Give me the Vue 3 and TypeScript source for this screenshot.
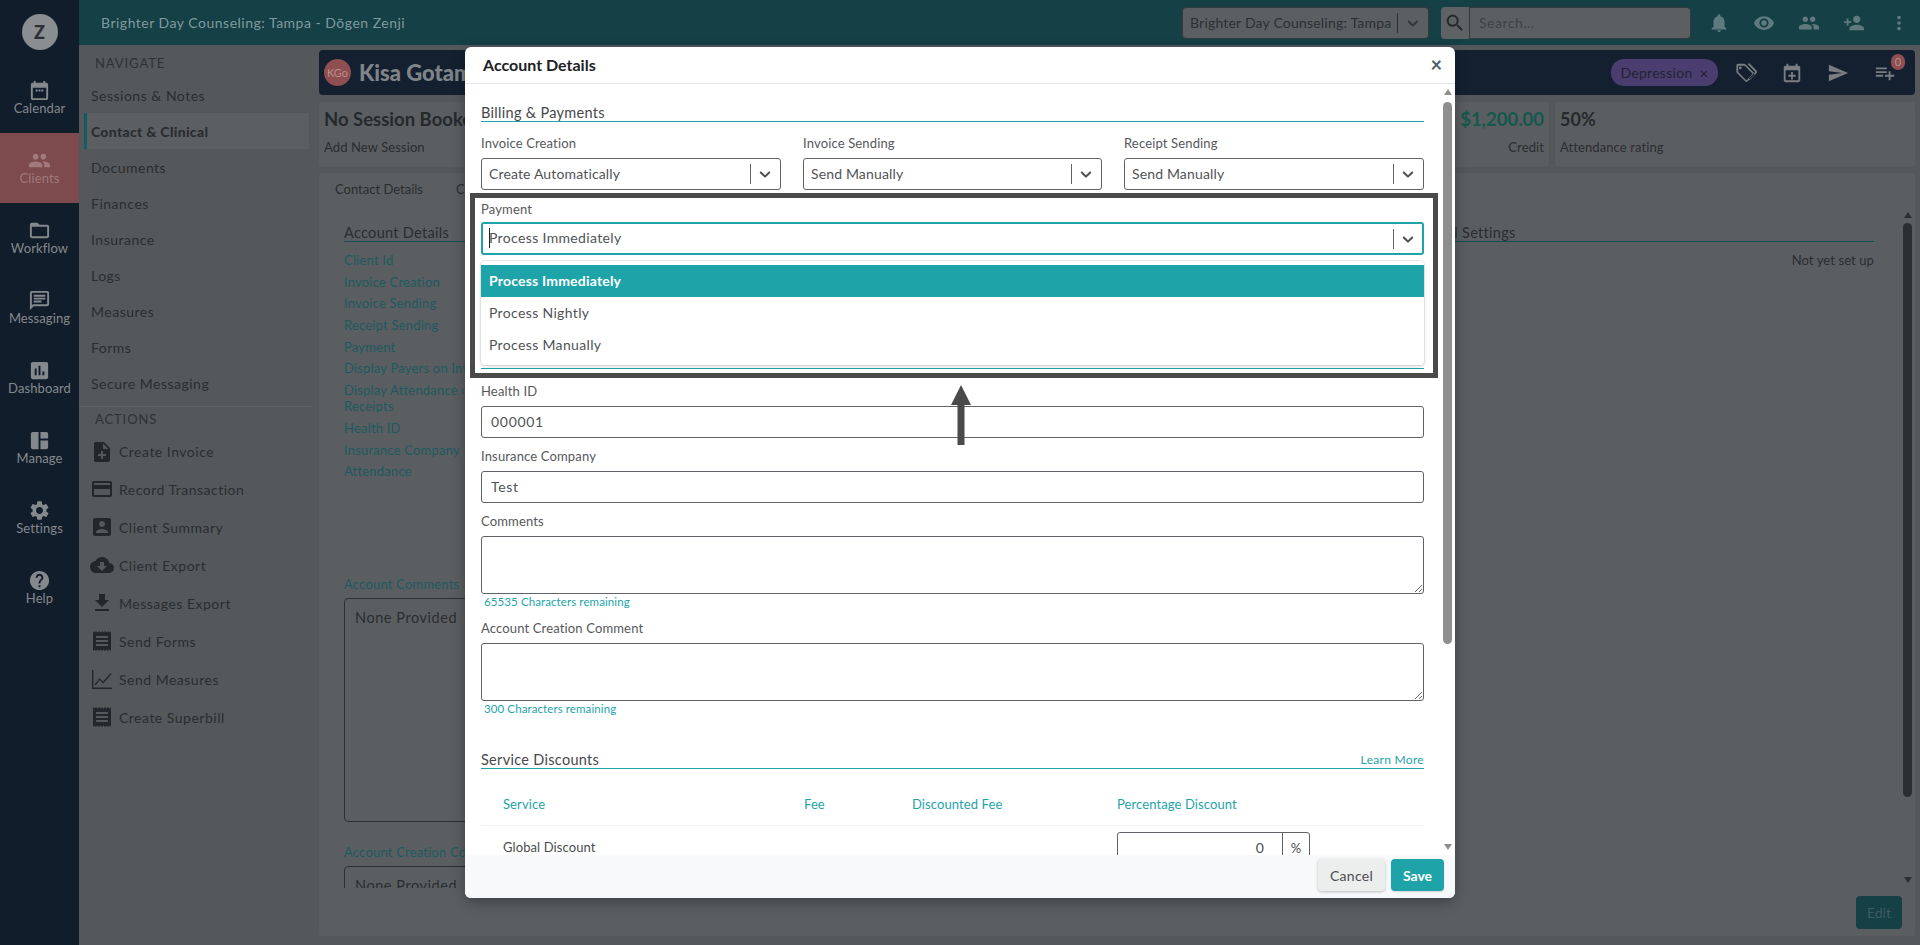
<script setup lang="ts">
const icons: Record<string, string> = {
  calendar: 'M19 4h-1V2h-2v2H8V2H6v2H5c-1.1 0-2 .9-2 2v14c0 1.1.9 2 2 2h14c1.1 0 2-.9 2-2V6c0-1.1-.9-2-2-2zm0 16H5V9h14v11zM8 11h2v2H8zm3 0h2v2h-2zm3 0h2v2h-2z',
  people: 'M16 11c1.66 0 2.99-1.34 2.99-3S17.66 5 16 5c-1.66 0-3 1.34-3 3s1.34 3 3 3zm-8 0c1.66 0 2.99-1.34 2.99-3S9.66 5 8 5C6.34 5 5 6.34 5 8s1.34 3 3 3zm0 2c-2.33 0-7 1.17-7 3.5V19h14v-2.5c0-2.33-4.67-3.5-7-3.5zm8 0c-.29 0-.62.02-.97.05 1.16.84 1.97 1.97 1.97 3.45V19h6v-2.5c0-2.33-4.67-3.5-7-3.5z',
  folder: 'M20 6h-8l-2-2H4c-1.1 0-1.99.9-1.99 2L2 18c0 1.1.9 2 2 2h16c1.1 0 2-.9 2-2V8c0-1.1-.9-2-2-2zm0 12H4V8h16v10z',
  message: 'M20 2H4c-1.1 0-1.99.9-1.99 2L2 22l4-4h14c1.1 0 2-.9 2-2V4c0-1.1-.9-2-2-2zm0 14H5.17L4 17.17V4h16v12zM6 12h8v2H6zm0-3h12v2H6zm0-3h12v2H6z',
  assessment: 'M19 3H5c-1.1 0-2 .9-2 2v14c0 1.1.9 2 2 2h14c1.1 0 2-.9 2-2V5c0-1.1-.9-2-2-2zM9 17H7v-7h2v7zm4 0h-2V7h2v10zm4 0h-2v-4h2v4z',
  manage: 'M11 21H5c-1.1 0-2-.9-2-2V5c0-1.1.9-2 2-2h6v18zm2 0h6c1.1 0 2-.9 2-2v-7h-8v9zm8-11V5c0-1.1-.9-2-2-2h-6v7h8z',
  settings: 'M19.14 12.94c.04-.3.06-.61.06-.94 0-.32-.02-.64-.07-.94l2.03-1.58c.18-.14.23-.41.12-.61l-1.92-3.32c-.12-.22-.37-.29-.59-.22l-2.39.96c-.5-.38-1.03-.7-1.62-.94l-.36-2.54c-.04-.24-.24-.41-.48-.41h-3.84c-.24 0-.43.17-.47.41l-.36 2.54c-.59.24-1.13.57-1.62.94l-2.39-.96c-.22-.08-.47 0-.59.22L2.74 8.87c-.12.21-.08.47.12.61l2.03 1.58c-.05.3-.09.63-.09.94s.02.64.07.94l-2.03 1.58c-.18.14-.23.41-.12.61l1.92 3.32c.12.22.37.29.59.22l2.39-.96c.5.38 1.03.7 1.62.94l.36 2.54c.05.24.24.41.48.41h3.84c.24 0 .44-.17.47-.41l.36-2.54c.59-.24 1.13-.56 1.62-.94l2.39.96c.22.08.47 0 .59-.22l1.92-3.32c.12-.22.07-.47-.12-.61l-2.01-1.58zM12 15.6c-1.98 0-3.6-1.62-3.6-3.6s1.62-3.6 3.6-3.6 3.6 1.62 3.6 3.6-1.62 3.6-3.6 3.6z',
  help: 'M12 2C6.48 2 2 6.48 2 12s4.48 10 10 10 10-4.48 10-10S17.52 2 12 2zm1 17h-2v-2h2v2zm2.07-7.75l-.9.92C13.45 12.9 13 13.5 13 15h-2v-.5c0-1.1.45-2.1 1.17-2.83l1.24-1.26c.37-.36.59-.86.59-1.41 0-1.1-.9-2-2-2s-2 .9-2 2H8c0-2.21 1.79-4 4-4s4 1.79 4 4c0 .88-.36 1.68-.93 2.25z',
  noteAdd: 'M14 2H6c-1.1 0-1.99.9-1.99 2L4 20c0 1.1.89 2 1.99 2H18c1.1 0 2-.9 2-2V8l-6-6zm2 14h-3v3h-2v-3H8v-2h3v-3h2v3h3v2zm-3-7V3.5L18.5 9H13z',
  card: 'M20 4H4c-1.11 0-1.99.89-1.99 2L2 18c0 1.11.89 2 2 2h16c1.11 0 2-.89 2-2V6c0-1.11-.89-2-2-2zm0 14H4v-6h16v6zm0-10H4V6h16v2z',
  accountBox: 'M3 5v14c0 1.1.89 2 2 2h14c1.1 0 2-.9 2-2V5c0-1.1-.9-2-2-2H5c-1.11 0-2 .9-2 2zm12 4c0 1.66-1.34 3-3 3s-3-1.34-3-3 1.34-3 3-3 3 1.34 3 3zm-9 8c0-2 4-3.1 6-3.1s6 1.1 6 3.1v1H6v-1z',
  cloud: 'M19.35 10.04C18.67 6.59 15.64 4 12 4 9.11 4 6.6 5.64 5.35 8.04 2.34 8.36 0 10.91 0 14c0 3.31 2.69 6 6 6h13c2.76 0 5-2.24 5-5 0-2.64-2.05-4.78-4.65-4.96zM17 13l-5 5-5-5h3V9h4v4h3z',
  download: 'M19 9h-4V3H9v6H5l7 7 7-7zM5 18v2h14v-2H5z',
  receipt: 'M18 17H6v-2h12v2zm0-4H6v-2h12v2zm0-4H6V7h12v2zM3 22l1.5-1.5L6 22l1.5-1.5L9 22l1.5-1.5L12 22l1.5-1.5L15 22l1.5-1.5L18 22l1.5-1.5L21 22V2l-1.5 1.5L18 2l-1.5 1.5L15 2l-1.5 1.5L12 2l-1.5 1.5L9 2 7.5 3.5 6 2 4.5 3.5 3 2v20z',
  chart: 'M2 3h1.4v17.6H22V22H2zM4.6 17.4l5-6.2 3.6 3.4L20.6 6l1 .9-8.3 9.6-3.6-3.4-4 5.1z',
  bell: 'M12 22c1.1 0 2-.9 2-2h-4c0 1.1.89 2 2 2zm6-6v-5c0-3.07-1.64-5.64-4.5-6.32V4c0-.83-.67-1.5-1.5-1.5s-1.5.67-1.5 1.5v.68C7.63 5.36 6 7.92 6 11v5l-2 2v1h16v-1l-2-2z',
  eye: 'M12 4.5C7 4.5 2.73 7.61 1 12c1.73 4.39 6 7.5 11 7.5s9.27-3.11 11-7.5c-1.73-4.39-6-7.5-11-7.5zM12 17c-2.76 0-5-2.24-5-5s2.24-5 5-5 5 2.24 5 5-2.24 5-5 5zm0-8c-1.66 0-3 1.34-3 3s1.34 3 3 3 3-1.34 3-3-1.34-3-3-3z',
  personAdd: 'M15 12c2.21 0 4-1.79 4-4s-1.79-4-4-4-4 1.79-4 4 1.79 4 4 4zm-9-2V7H4v3H1v2h3v3h2v-3h3v-2H6zm9 4c-2.67 0-8 1.34-8 4v2h16v-2c0-2.66-5.33-4-8-4z',
  more: 'M12 8c1.1 0 2-.9 2-2s-.9-2-2-2-2 .9-2 2 .9 2 2 2zm0 2c-1.1 0-2 .9-2 2s.9 2 2 2 2-.9 2-2-.9-2-2-2zm0 6c-1.1 0-2 .9-2 2s.9 2 2 2 2-.9 2-2-.9-2-2-2z',
  search: 'M15.5 14h-.79l-.28-.27C15.41 12.59 16 11.11 16 9.5 16 5.91 13.09 3 9.5 3S3 5.91 3 9.5 5.91 16 9.5 16c1.61 0 3.09-.59 4.23-1.57l.27.28v.79l5 4.99L20.49 19l-4.99-5zm-6 0C7.01 14 5 11.99 5 9.5S7.01 5 9.5 5 14 7.01 14 9.5 11.99 14 9.5 14z',
  send: 'M2.01 21L23 12 2.01 3 2 10l15 2-15 2z',
  tags: 'M20.6 11.6l-9-9C11.3 2.2 10.8 2 10.2 2H3.5C2.4 2 1.5 2.9 1.5 4v6.7c0 .6.2 1.1.6 1.4l9 9c.4.4.9.6 1.4.6s1-.2 1.4-.6l6.7-6.7c.4-.4.6-.9.6-1.4s-.2-1.1-.6-1.4zM12.5 20.1l-9-9.1V4h6.8v-.1l8.9 9-6.7 7.2zM5.8 5a1.5 1.5 0 1 0 0 3 1.5 1.5 0 1 0 0-3zM14 2.4l1.4-1.3 8 8.3c.8.8.8 2 0 2.8l-7 7.2-1.3-1.3 7-7.3z',
  eventAdd: 'M19 4h-1V2h-2v2H8V2H6v2H5c-1.1 0-2 .9-2 2v14c0 1.1.9 2 2 2h14c1.1 0 2-.9 2-2V6c0-1.1-.9-2-2-2zm0 16H5V9h14v11zM11 11h2v3h3v2h-3v3h-2v-3H8v-2h3z',
  playlistAdd: 'M14 10H2v2h12v-2zm0-4H2v2h12V6zm4 8v-4h-2v4h-4v2h4v4h2v-4h4v-2h-4zM2 16h8v-2H2v2z',
}

const chevron = 'M4.516 7.548c0.436-0.446 1.043-0.481 1.576 0l3.908 3.747 3.908-3.747c0.533-0.481 1.141-0.446 1.574 0 0.436 0.445 0.408 1.197 0 1.615-0.406 0.418-4.695 4.502-4.695 4.502-0.217 0.223-0.502 0.335-0.787 0.335s-0.57-0.112-0.789-0.335c0 0-4.287-4.084-4.695-4.502s-0.436-1.17 0-1.615z'

const railItems = [
  { label: 'Calendar', icon: 'calendar' },
  { label: 'Clients', icon: 'people', active: true },
  { label: 'Workflow', icon: 'folder' },
  { label: 'Messaging', icon: 'message' },
  { label: 'Dashboard', icon: 'assessment' },
  { label: 'Manage', icon: 'manage' },
  { label: 'Settings', icon: 'settings' },
  { label: 'Help', icon: 'help' },
]

const navItems = ['Sessions & Notes', 'Contact & Clinical', 'Documents', 'Finances', 'Insurance', 'Logs', 'Measures', 'Forms', 'Secure Messaging']

const actions = [
  { label: 'Create Invoice', icon: 'noteAdd' },
  { label: 'Record Transaction', icon: 'card' },
  { label: 'Client Summary', icon: 'accountBox' },
  { label: 'Client Export', icon: 'cloud' },
  { label: 'Messages Export', icon: 'download' },
  { label: 'Send Forms', icon: 'receipt' },
  { label: 'Send Measures', icon: 'chart' },
  { label: 'Create Superbill', icon: 'receipt' },
]

const accountFields = ['Client Id', 'Invoice Creation', 'Invoice Sending', 'Receipt Sending', 'Payment', 'Display Payers on Inv', 'Display Attendance on\nReceipts', 'Health ID', 'Insurance Company', 'Attendance']

const billingSelects = [
  { label: 'Invoice Creation', value: 'Create Automatically' },
  { label: 'Invoice Sending', value: 'Send Manually' },
  { label: 'Receipt Sending', value: 'Send Manually' },
]

const paymentOptions = ['Process Immediately', 'Process Nightly', 'Process Manually']
</script>

<template>
  <div class="page">
    <aside class="rail">
      <div class="avatar">Z</div>
      <a v-for="item in railItems" :key="item.label" class="rail-item" :class="{ active: item.active }">
        <svg viewBox="0 0 24 24" class="rail-icon"><path :d="icons[item.icon]" /></svg>
        <span>{{ item.label }}</span>
      </a>
    </aside>

    <div class="shell">
      <header class="topbar">
        <div class="practice">Brighter Day Counseling: Tampa - Dōgen Zenji</div>
        <div class="top-select">
          <span class="top-select-text">Brighter Day Counseling: Tampa</span>
          <i class="top-sep"></i>
          <svg viewBox="0 0 20 20" class="chev"><path :d="chevron" /></svg>
        </div>
        <div class="search">
          <span class="search-btn"><svg viewBox="0 0 24 24"><path :d="icons.search" /></svg></span>
          <span class="search-input">Search...</span>
        </div>
        <div class="top-icons">
          <svg viewBox="0 0 24 24"><path :d="icons.bell" /></svg>
          <svg viewBox="0 0 24 24"><path :d="icons.eye" /></svg>
          <svg viewBox="0 0 24 24"><path :d="icons.people" /></svg>
          <svg viewBox="0 0 24 24"><path :d="icons.personAdd" /></svg>
          <svg viewBox="0 0 24 24"><path :d="icons.more" /></svg>
        </div>
      </header>

      <div class="workspace">
        <nav class="sidebar">
          <div class="side-title">NAVIGATE</div>
          <a v-for="(item, i) in navItems" :key="item" class="nav-item" :class="{ current: i === 1 }">{{ item }}</a>
          <div class="side-title actions-title">ACTIONS</div>
          <a v-for="item in actions" :key="item.label" class="action-item">
            <svg viewBox="0 0 24 24"><path :d="icons[item.icon]" /></svg>
            <span>{{ item.label }}</span>
          </a>
        </nav>

        <main class="main">
          <section class="client-bar">
            <span class="client-avatar">KGo</span>
            <span class="client-name">Kisa Gotami</span>
            <span class="pill">Depression <small>×</small></span>
            <svg viewBox="0 0 24 24" class="bar-icon"><path :d="icons.tags" /></svg>
            <svg viewBox="0 0 24 24" class="bar-icon"><path :d="icons.eventAdd" /></svg>
            <svg viewBox="0 0 24 24" class="bar-icon"><path :d="icons.send" /></svg>
            <span class="queue">
              <svg viewBox="0 0 24 24" class="bar-icon"><path :d="icons.playlistAdd" /></svg>
              <b class="queue-badge">0</b>
            </span>
          </section>

          <section class="stats">
            <div class="stat-card session">
              <div class="stat-main">
                <strong>No Session Booked</strong>
                <span>Add New Session</span>
              </div>
              <div class="stat-credit">
                <strong>$1,200.00</strong>
                <span>Credit</span>
              </div>
            </div>
            <div class="stat-card attendance">
              <strong>50%</strong>
              <span>Attendance rating</span>
            </div>
          </section>

          <section class="panel">
            <div class="tabs">
              <span>Contact Details</span>
              <span>Clinical Details</span>
            </div>
            <div class="panel-scroll">
              <div class="panel-columns">
                <div class="account-col">
                  <h4 class="panel-head">Account Details</h4>
                  <ul class="field-list">
                    <li v-for="field in accountFields" :key="field">{{ field }}</li>
                  </ul>
                  <div class="box-label comments-label">Account Comments</div>
                  <div class="read-box tall">None Provided</div>
                  <div class="box-label creation-label">Account Creation Comment</div>
                  <div class="read-box">None Provided</div>
                </div>
                <div class="settings-col">
                  <h4 class="panel-head">Additional Settings</h4>
                  <div class="not-setup">Not yet set up</div>
                </div>
              </div>
              <div class="scrollbar dark">
                <i class="arrow up"></i>
                <i class="thumb"></i>
                <i class="arrow down"></i>
              </div>
            </div>
            <div class="panel-foot"><button class="edit-btn" type="button">Edit</button></div>
          </section>
        </main>
      </div>
    </div>

    <div class="modal">
      <div class="modal-head">
        <h2>Account Details</h2>
        <span class="close">×</span>
      </div>

      <div class="modal-body">
        <div class="modal-content">
          <h3 class="section-head first">Billing &amp; Payments</h3>

          <div class="select-row">
            <div v-for="sel in billingSelects" :key="sel.label" class="field">
              <label>{{ sel.label }}</label>
              <div class="select">
                <span>{{ sel.value }}</span>
                <i class="sep"></i>
                <svg viewBox="0 0 20 20" class="chev"><path :d="chevron" /></svg>
              </div>
            </div>
          </div>

          <div class="field payment">
            <label>Payment</label>
            <div class="select focused">
              <span><i class="caret"></i>Process Immediately</span>
              <i class="sep"></i>
              <svg viewBox="0 0 20 20" class="chev"><path :d="chevron" /></svg>
            </div>
            <ul class="menu">
              <li v-for="(opt, i) in paymentOptions" :key="opt" :class="{ selected: i === 0 }">{{ opt }}</li>
            </ul>
          </div>
          <div class="hidden-section"></div>

          <div class="field health">
            <label>Health ID</label>
            <input class="text-input" type="text" value="000001" />
          </div>
          <div class="field next">
            <label>Insurance Company</label>
            <input class="text-input" type="text" value="Test" />
          </div>
          <div class="field next">
            <label>Comments</label>
            <textarea class="area" rows="3"></textarea>
            <div class="hint">65535 Characters remaining</div>
          </div>
          <div class="field note">
            <label>Account Creation Comment</label>
            <textarea class="area" rows="3"></textarea>
            <div class="hint">300 Characters remaining</div>
          </div>

          <h3 class="section-head discounts">Service Discounts <a class="learn">Learn More</a></h3>

          <div class="discount-row heading">
            <span>Service</span>
            <span>Fee</span>
            <span>Discounted Fee</span>
            <span>Percentage Discount</span>
          </div>
          <div class="discount-row">
            <span>Global Discount</span>
            <span></span>
            <span></span>
            <div class="percent">
              <span class="percent-value">0</span>
              <span class="percent-unit">%</span>
            </div>
          </div>
        </div>

        <div class="scrollbar">
          <i class="arrow up"></i>
          <i class="thumb"></i>
          <i class="arrow down"></i>
        </div>
      </div>

      <div class="modal-foot">
        <button class="btn cancel" type="button">Cancel</button>
        <button class="btn save" type="button">Save</button>
      </div>

      <!-- screenshot annotation -->
      <div class="callout"></div>
      <svg class="callout-arrow" viewBox="0 0 20 60"><path d="M10 0L20 20H13.5V60H6.500V20H0z" /></svg>
    </div>
  </div>
</template>

<style>
html, body { margin: 0; background: #54585b; }
</style>

<style scoped>
* { box-sizing: border-box; }
.page {
  position: relative;
  display: flex;
  width: 1920px;
  height: 945px;
  overflow: hidden;
  font-family: Lato, "Open Sans", sans-serif;
  font-size: 14px;
  color: #2a2d30;
  background: #54585b;
}
svg { display: block; fill: currentColor; }

/* rail */
.rail { width: 79px; flex: none; background: #121d2b; color: #84898d; display: flex; flex-direction: column; align-items: center; }
.avatar { width: 36px; height: 36px; margin: 14px 0 13px; border-radius: 50%; background: #8b8e90; color: #2c3036; font-size: 18px; font-weight: 900; display: flex; align-items: center; justify-content: center; }
.rail-item { width: 100%; height: 70px; display: flex; flex-direction: column; align-items: center; justify-content: center; font-size: 13px; line-height: 16px; letter-spacing: .1px; padding-bottom: 1px; }
.rail-item.active { background: #7d4a4d; color: #a07a7d; }
.rail-icon { width: 23px; height: 23px; margin-bottom: -2px; }

/* shell */
.shell { flex: 1; min-width: 0; display: flex; flex-direction: column; }
.topbar { height: 45px; flex: none; background: #154046; display: flex; align-items: center; padding-left: 22px; }
.practice { width: 1081px; flex: none; color: #7f9a9e; font-size: 14px; letter-spacing: .5px; }
.top-select { width: 247px; height: 32px; flex: none; display: flex; align-items: center; background: #5b5f62; border: 1px solid #33393d; border-radius: 4px; padding: 0 6px 0 7px; color: #2b2f32; font-size: 14px; letter-spacing: .2px; }
.top-select-text { width: 210px; white-space: nowrap; }
.top-sep { width: 1px; height: 20px; background: #2b2f32; margin-right: 6px; }
.chev { width: 18px; height: 18px; color: #4c5054; }
.top-select .chev { color: #33373a; }
.search { display: flex; height: 32px; margin-left: 12px; flex: none; }
.search-btn { width: 28px; background: #5e6265; border-radius: 4px 0 0 4px; display: flex; align-items: center; justify-content: center; color: #23272a; }
.search-btn svg { width: 22px; height: 22px; }
.search-input { width: 222px; background: #5b5f62; border: 1px solid #33393d; border-radius: 0 4px 4px 0; padding: 0 9px; line-height: 30px; color: #3e4245; letter-spacing: .5px; }
.top-icons { display: flex; gap: 23px; margin-left: 17px; color: #5f7a7e; }
.top-icons svg { width: 22px; height: 22px; }

.workspace { flex: 1; min-height: 0; display: flex; }

/* sidebar */
.sidebar { width: 240px; flex: none; padding-top: 8px; }
.side-title { padding-left: 16px; font-size: 13px; line-height: 20px; letter-spacing: .9px; color: #2e3236; height: 24px; }
.nav-item { display: flex; align-items: center; height: 36px; margin-left: 5px; margin-right: 10px; padding-left: 7px; font-size: 14px; letter-spacing: .5px; color: #2a2d30; }
.nav-item.current { background: #5b5f62; border-left: 3px solid #155c60; padding-left: 4px; font-weight: 900; letter-spacing: .3px; }
.actions-title { margin-top: 5px; border-top: 1px solid #5e6366; margin-right: 6px; padding-top: 2px; height: 27px; }
.action-item { display: flex; align-items: center; height: 38px; padding-left: 11px; gap: 5px; letter-spacing: .5px; font-size: 14px; }
.actions-title + .action-item { height: 37px; }
.action-item svg { width: 24px; height: 24px; flex: none; color: #23262a; }

/* main */
.main { flex: 1; min-width: 0; display: flex; flex-direction: column; padding: 5px 5px 9px 0; }
.client-bar { height: 45px; flex: none; background: #142030; border-radius: 4px; display: flex; align-items: center; padding: 0 18px 0 5px; color: #8a8f94; }
.client-avatar { width: 27px; height: 27px; border-radius: 50%; background: #8f4f50; color: #b88d8e; font-size: 11px; display: flex; align-items: center; justify-content: center; flex: none; }
.client-name { margin-left: 8px; font-size: 22px; font-weight: 900; color: #7f8489; width: 1252px; flex: none; white-space: nowrap; }
.pill { width: 107px; height: 27px; flex: none; border-radius: 13px; background: #4a3d70; color: #1f2530; font-size: 14px; letter-spacing: .3px; display: flex; align-items: center; justify-content: center; gap: 7px; }
.pill small { font-size: 15px; }
.bar-icon { width: 22px; height: 22px; color: #797e83; margin-left: 16px; flex: none; }
.client-bar > .bar-icon:nth-of-type(1) { margin-left: 17px; }
.client-bar > .bar-icon:nth-of-type(2), .client-bar > .bar-icon:nth-of-type(3) { margin-left: 24px; }
.queue { position: relative; margin-left: 9px; }
.queue-badge { position: absolute; top: -8px; right: -9px; width: 14px; height: 16px; border-radius: 8px; background: #8f4f50; color: #b88d8e; font-size: 11px; font-weight: 400; display: flex; align-items: center; justify-content: center; }

.stats { display: flex; gap: 6px; height: 65px; flex: none; margin-top: 7px; }
.stat-card { background: #5a5e61; border-radius: 3px; padding: 4px 5px 0; }
.stat-card strong { display: block; font-size: 18.500px; line-height: 26px; font-weight: 700; color: #26292c; }
.stat-card span { display: block; margin-top: 6px; line-height: 18px; font-size: 13px; letter-spacing: .1px; color: #2a2d30; }
.session { width: 1230px; display: flex; justify-content: space-between; }
.stat-credit { text-align: right; }
.stat-credit strong { color: #14574c; }
.attendance { width: 360px; }
.attendance strong { font-size: 18px; }

.panel { flex: 1; min-height: 0; margin-top: 6px; background: #5a5e61; border-radius: 3px; display: flex; flex-direction: column; }
.tabs { height: 34px; flex: none; display: flex; gap: 33px; padding: 7px 16px 0; font-size: 13px; line-height: 18px; }
.panel-scroll { height: 681px; flex: none; display: flex; overflow: hidden; }
.panel-columns { flex: 1; display: grid; grid-template-columns: 1000px 484px; column-gap: 46px; padding: 17px 0 0 25px; align-items: start; }
.panel-head { margin: 0; font-size: 14.500px; font-weight: 400; line-height: 17px; letter-spacing: .3px; border-bottom: 1px solid #134f54; }
.field-list { margin: 10px 0 0; padding: 0; list-style: none; color: #1d5a60; letter-spacing: .2px; font-size: 13px; }
.field-list li { line-height: 16px; margin-bottom: 5.700px; white-space: pre-line; }
.box-label { color: #1d5a60; font-size: 13px; line-height: 16px; letter-spacing: .2px; }
.comments-label { margin-top: 97px; }
.creation-label { margin-top: 22px; }
.read-box { margin-top: 6px; border: 1px solid #2d3033; border-radius: 4px; padding: 10px; height: 120px; font-size: 14.500px; line-height: 17px; letter-spacing: .55px; color: #2a2d30; }
.read-box.tall { height: 224px; }
.not-setup { margin-top: 10px; text-align: right; line-height: 16px; font-size: 13px; letter-spacing: .1px; }
.panel-foot { flex: 1; display: flex; justify-content: flex-end; align-items: flex-start; padding: 8px 13px 0 0; }
.edit-btn { width: 46px; height: 33px; border: 0; border-radius: 4px; background: #154046; color: #3f5b5f; font: inherit; padding: 0; }

.scrollbar { width: 9px; flex: none; margin: 0 3px 0 0; display: flex; flex-direction: column; align-items: center; color: #8e8e8e; }
.scrollbar .arrow { width: 0; height: 0; flex: none; border-left: 4.500px solid transparent; border-right: 4.500px solid transparent; }
.scrollbar .arrow.up { border-bottom: 6px solid currentColor; margin-top: 5px; }
.scrollbar .arrow.down { border-top: 6px solid currentColor; margin-top: auto; margin-bottom: 5px; }
.scrollbar .thumb { width: 9px; height: 542px; flex: none; border-radius: 5px; background: currentColor; margin-top: 7px; }
.scrollbar.dark { color: #2c2f32; margin: 0 3px 0 3px; }
.scrollbar.dark .thumb { height: 574px; margin-top: 5px; }

/* modal */
.modal { position: absolute; left: 465px; top: 47px; width: 990px; height: 851px; background: #fff; border-radius: 6px; box-shadow: 0 4px 14px rgba(0, 0, 0, .3); display: flex; flex-direction: column; color: #4a4d50; font-size: 14px; }
.modal-head { height: 37px; flex: none; display: flex; align-items: center; justify-content: space-between; padding: 0 13px 2px 18px; border-bottom: 1px solid #e3e5e6; }
.modal-head h2 { margin: 0; font-size: 16px; font-weight: 700; color: #1d2124; }
.close { font-size: 20px; font-weight: 700; color: #4f5e6d; }
.modal-body { flex: 1; min-height: 0; display: flex; overflow: hidden; }
.modal-content { width: 978px; flex: none; padding: 0 19px 0 16px; }
.section-head { margin: 0; display: flex; justify-content: space-between; align-items: flex-end; font-size: 14.500px; font-weight: 400; line-height: 17px; letter-spacing: .3px; color: #45484b; border-bottom: 1px solid #1da3a8; }
.section-head.first { padding-top: 20px; }
.discounts { margin-top: 34px; }
.learn { font-size: 12px; color: #1da3a8; letter-spacing: .3px; line-height: 16px; }
.select-row { display: grid; grid-template-columns: 300px 299px 300px; column-gap: 22px; margin-top: 13px; }
.field label { display: block; font-size: 13px; line-height: 16px; letter-spacing: .15px; color: #55585b; margin-bottom: 7px; }
.payment { position: relative; margin-top: 11px; }
.payment label { margin-bottom: 5px; }
.select { height: 32px; display: flex; align-items: center; border: 1px solid #5f6368; border-radius: 3px; padding: 0 6px 0 7px; font-size: 14px; letter-spacing: .15px; color: #505356; }
.select > span:first-child { flex: 1; white-space: nowrap; padding-bottom: 2px; }
.select .sep { width: 1px; height: 20px; background: #5f6368; margin-right: 5px; }
.select.focused { height: 33px; border: 2px solid #1da3a8; padding: 0 5px 0 6px; letter-spacing: .35px; }
.caret { display: inline-block; width: 1px; height: 20px; background: #222; vertical-align: -5px; margin-right: -1px; }
.menu { position: absolute; left: 0; right: 0; top: calc(100% + 6px); z-index: 2; margin: 0; padding: 4px 0; list-style: none; background: #fff; border-radius: 4px; box-shadow: 0 0 0 1px rgba(0, 0, 0, .08), 0 2px 4px rgba(0, 0, 0, .12); }
.menu li { height: 32px; line-height: 32px; padding-left: 8px; font-size: 14px; letter-spacing: .35px; color: #505356; }
.menu li.selected { background: #1da3a8; color: #fff; font-weight: 700; letter-spacing: .2px; }
.hidden-section { height: 114px; border-bottom: 1px solid #1da3a8; }
.health { margin-top: 14px; }
.next { margin-top: 10px; }
.note { margin-top: 10px; }
.text-input { display: block; width: 100%; height: 32px; border: 1px solid #5f6368; border-radius: 3px; padding: 0 9px 2px; font: inherit; letter-spacing: .7px; color: #505356; outline: none; }
.area { display: block; width: 100%; height: 58px; border: 1px solid #5f6368; border-radius: 3px; font: inherit; resize: vertical; outline: none; }
.hint { padding-left: 3px; font-size: 11.500px; line-height: 16px; color: #1da3a8; letter-spacing: .1px; }
.discount-row { display: grid; grid-template-columns: 301px 108px 205px 1fr; padding-left: 22px; color: #4a4d50; font-size: 13px; letter-spacing: .1px; }
.discount-row.heading { padding-top: 26px; padding-bottom: 12px; line-height: 18px; color: #1da3a8; border-bottom: 1px solid #f1f2f3; }
.discount-row:not(.heading) { padding-top: 6px; }
.discount-row:not(.heading) > span:first-child { line-height: 30px; }
.percent { width: 193px; height: 32px; display: flex; border: 1px solid #5f6368; border-radius: 3px; }
.percent-value { flex: 1; text-align: right; padding-right: 18px; line-height: 30px; font-size: 14px; }
.percent-unit { width: 27px; border-left: 1px solid #5f6368; text-align: center; line-height: 30px; font-size: 13px; }
.modal-foot { height: 43px; flex: none; background: #f8f9fa; border-radius: 0 0 6px 6px; display: flex; justify-content: flex-end; align-items: center; gap: 6px; padding: 0 11px 3px 0; }
.btn { height: 32px; border: 0; border-radius: 4px; font: inherit; padding: 0; }
.cancel { width: 67px; background: #eceded; color: #4a4d50; box-shadow: 0 1px 3px rgba(0, 0, 0, .25); letter-spacing: .3px; }
.save { width: 53px; background: #1da3a8; color: #fff; font-weight: 700; box-shadow: 0 1px 2px rgba(0, 0, 0, .15); }
.callout { position: absolute; left: 5px; top: 146px; width: 968px; height: 185px; border: 5px solid #4a4a4a; pointer-events: none; z-index: 3; }
.callout-arrow { position: absolute; left: 486px; top: 338px; width: 20px; height: 60px; fill: #4a4a4a; z-index: 3; }
</style>
